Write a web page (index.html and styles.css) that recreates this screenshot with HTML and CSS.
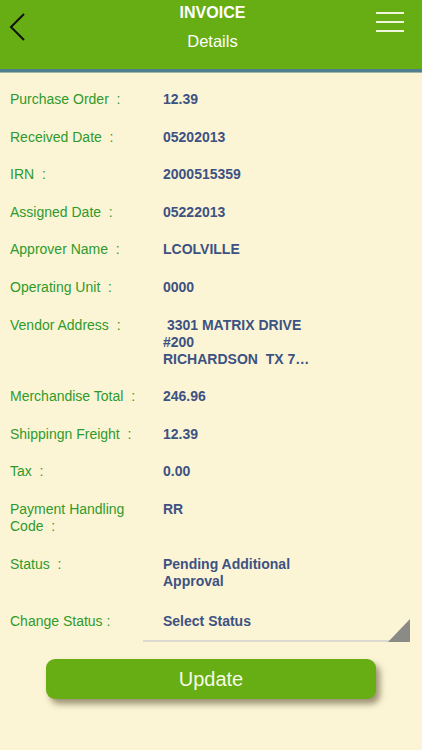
FILE: index.html
```html
<!DOCTYPE html>
<html lang="en">
<head>
    <meta charset="UTF-8">
    <meta name="viewport" content="width=device-width, initial-scale=1.0">
    <title>Invoice Details</title>
    <link rel="stylesheet" href="styles.css">
</head>
<body>
    <div class="header">
        <a class="back" href="#">
            <svg width="18" height="30" viewBox="0 0 18 30">
                <polyline points="15,2 2,15 15,28" fill="none" stroke="#111" stroke-width="2"/>
            </svg>
        </a>
        <div class="title">
            <h1>INVOICE</h1>
            <p>Details</p>
        </div>
        <a class="menu" href="#">
            <span></span><span></span><span></span>
        </a>
    </div>

    <div class="details">
        <div class="row"><div class="label">Purchase Order  :</div><div class="value">12.39</div></div>
        <div class="row"><div class="label">Received Date  :</div><div class="value">05202013</div></div>
        <div class="row"><div class="label">IRN  :</div><div class="value">2000515359</div></div>
        <div class="row"><div class="label">Assigned Date  :</div><div class="value">05222013</div></div>
        <div class="row"><div class="label">Approver Name  :</div><div class="value">LCOLVILLE</div></div>
        <div class="row"><div class="label">Operating Unit  :</div><div class="value">0000</div></div>
        <div class="row"><div class="label">Vendor Address  :</div><div class="value address"> 3301 MATRIX DRIVE
#200
RICHARDSON  TX 7…</div></div>
        <div class="row"><div class="label">Merchandise Total  :</div><div class="value">246.96</div></div>
        <div class="row"><div class="label">Shippingn Freight  :</div><div class="value">12.39</div></div>
        <div class="row"><div class="label">Tax  :</div><div class="value">0.00</div></div>
        <div class="row"><div class="label">Payment Handling Code  :</div><div class="value">RR</div></div>
        <div class="row"><div class="label">Status  :</div><div class="value">Pending Additional Approval</div></div>
        <div class="row change"><div class="label">Change Status :</div>
            <div class="select">Select Status<span class="arrow"></span></div>
        </div>
    </div>

    <div class="actions">
        <button class="update">Update</button>
    </div>
</body>
</html>
```

FILE: styles.css
```css
:root {
    --green: #67ad14;
    --label: #2f9a2c;
    --value: #3d5283;
    --paper: #fcf5d5;
}

body {
    margin: 0;
    background: var(--paper);
    font-family: "Liberation Sans", Arial, sans-serif;
    min-height: 750px;
}

.header {
    height: 69px;
    background: var(--green);
    border-bottom: 3px solid #4f7f8e;
    box-shadow: 0 1px 0 #9fb5a6;
    display: flex;
    align-items: flex-start;
    justify-content: space-between;
}

.back {
    padding: 12px 0 0 9px;
    width: 40px;
}

.title {
    text-align: center;
    color: #fff;
}

.title h1 {
    margin: 4px 0 0;
    font-size: 16px;
    font-weight: bold;
    line-height: 18px;
}

.title p {
    margin: 10px 0 0;
    font-size: 16.5px;
    line-height: 18px;
}

.menu {
    width: 28px;
    padding: 12px 18px 0 0;
    display: flex;
    flex-direction: column;
    gap: 7px;
}

.menu span {
    display: block;
    height: 2px;
    background: #eef6dc;
}

.details {
    padding: 19px 0 0 10px;
    display: flex;
    flex-direction: column;
    gap: 20.6px;
}

.row {
    display: flex;
    font-size: 14px;
    line-height: 17px;
}

.label {
    width: 153px;
    padding-right: 20px;
    box-sizing: border-box;
    color: var(--label);
    white-space: pre-wrap;
}

.value {
    width: 150px;
    color: var(--value);
    font-weight: bold;
}

.address {
    white-space: pre;
}

.change {
    margin-top: 3px;
}

.select {
    position: relative;
    margin-left: -20px;
    width: 267px;
    padding: 0 0 10px 20px;
    box-sizing: border-box;
    color: var(--value);
    font-weight: bold;
    border-bottom: 2px solid #dcdad0;
}

.arrow {
    position: absolute;
    right: 0;
    bottom: -2px;
    width: 0;
    height: 0;
    border-left: 22px solid transparent;
    border-bottom: 23px solid #8a8a86;
}

.actions {
    padding: 17px 0 0 46px;
}

.update {
    width: 330px;
    height: 40px;
    border: none;
    border-radius: 9px;
    background: var(--green);
    color: #f5fbe4;
    font-family: "Liberation Sans", Arial, sans-serif;
    font-size: 20px;
    box-shadow: 4px 5px 6px rgba(60, 50, 20, 0.5);
    cursor: pointer;
}
```
